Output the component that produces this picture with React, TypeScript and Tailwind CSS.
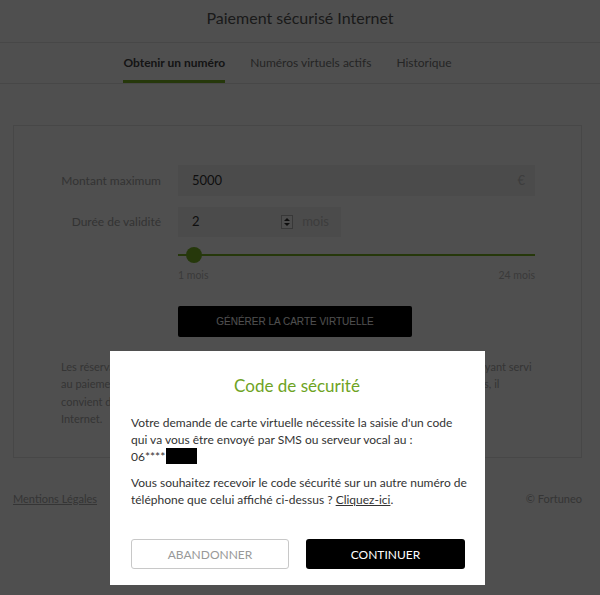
export default function App() {
  return (
    <div className="relative min-h-[595px] bg-white font-['Lato','Open_Sans',sans-serif] overflow-hidden">
      <header className="flex h-[43px] items-center justify-center border-b border-[#e6e6e6] pb-[6px] text-[16px] text-[#555]">
        Paiement sécurisé Internet
      </header>

      <nav className="flex h-[41px] justify-center gap-[25px] border-b border-[#e6e6e6] pr-[25px] text-[12px]">
        <span className="flex h-full items-center border-b-[3px] border-[#7ab526] pt-[3px] font-bold text-[#444]">
          Obtenir un numéro
        </span>
        <span className="flex h-full items-center text-[#777]">Numéros virtuels actifs</span>
        <span className="flex h-full items-center text-[#777]">Historique</span>
      </nav>

      <section className="ml-[13px] mr-[18px] mt-[41px] border border-[#e6e6e6] px-[47px] pb-[29px] pt-[39px]">
        <div className="grid grid-cols-[100px_357px] gap-x-[17px] gap-y-[11px]">
          <label className="flex items-center justify-end whitespace-nowrap text-[12px] text-[#a6a6a6]">Montant maximum</label>
          <div className="flex h-[31px] items-center justify-between bg-[#f2f2f2] pl-[14px] pr-[10px] text-[13px]">
            <span className="text-[#333]">5000</span>
            <span className="text-[#c4c4c4]">€</span>
          </div>

          <label className="flex items-center justify-end whitespace-nowrap text-[12px] text-[#a6a6a6]">Durée de validité</label>
          <div className="flex h-[30px] w-[163px] items-center bg-[#f2f2f2] pl-[14px] text-[13px]">
            <span className="flex-1 text-[#333]">2</span>
            <span className="flex h-[14px] w-[12px] flex-col items-center justify-center gap-[2px] border border-[#b5b5b5] bg-[#f7f7f7]">
              <span className="h-0 w-0 border-x-[3px] border-b-[3px] border-x-transparent border-b-[#333]" />
              <span className="h-0 w-0 border-x-[3px] border-t-[3px] border-x-transparent border-t-[#333]" />
            </span>
            <span className="ml-[9px] mr-[12px] text-[#c4c4c4]">mois</span>
          </div>

          <div />
          <div className="-mt-[1px]">
            <div className="relative flex h-[16px] items-center">
              <div className="h-[2px] w-full bg-[#7ab526]" />
              <div className="absolute left-[8px] top-0 h-[16px] w-[16px] rounded-full bg-[#7ab526]" />
            </div>
            <div className="mt-[5px] flex justify-between text-[10.5px] text-[#bbb]">
              <span>1 mois</span>
              <span>24 mois</span>
            </div>
            <button className="mt-[22px] h-[31px] w-[234px] rounded-[2px] bg-black font-['Liberation_Sans',sans-serif] text-[10px] text-white">
              GÉNÉRER LA CARTE VIRTUELLE
            </button>
          </div>
        </div>

        <p className="mt-[21px] text-[11px] leading-[17.5px] text-[#aaa]">
          Les réservations (hôtel, location de voiture...) peuvent exiger la présentation de la carte ayant servi
          <br />
          au paiement. Les cartes virtuelles n'étant pas acceptées par tous les commerçants et sites, il
          <br />
          convient de vérifier les conditions du commerçant avant de finaliser votre transaction
          <br />
          Internet.
        </p>
      </section>

      <footer className="ml-[13px] mr-[18px] mt-[33px] flex justify-between text-[11px] text-[#aaa]">
        <a className="underline">Mentions Légales</a>
        <span>© Fortuneo</span>
      </footer>

      <div className="absolute inset-0 bg-[rgba(0,0,0,0.69)]" />

      <div className="absolute left-[110px] top-[351px] h-[234px] w-[375px] bg-white pl-[21px] pr-[16px] pt-[24px] text-[12px] leading-[17px] text-[#333]">
        <h2 className="pr-[6px] text-center text-[17px] leading-[22px] text-[#6ea324]">Code de sécurité</h2>
        <p className="mt-[17px]">
          Votre demande de carte virtuelle nécessite la saisie d'un code qui va vous être envoyé par SMS ou serveur vocal au :
          <br />
          06****<span className="ml-[1px] inline-block h-[16px] w-[31px] bg-black align-[-3px]" />
        </p>
        <p className="mt-[9px]">
          Vous souhaitez recevoir le code sécurité sur un autre numéro de téléphone que celui affiché ci-dessus ?{' '}
          <a className="underline">Cliquez-ici</a>.
        </p>
        <div className="mt-[31px] flex gap-[17px]">
          <button className="h-[30px] w-[158px] rounded-[3px] border border-[#c8c8c8] text-[12px] text-[#999]">
            ABANDONNER
          </button>
          <button className="h-[30px] w-[159px] rounded-[3px] bg-black text-[12px] text-white">CONTINUER</button>
        </div>
      </div>
    </div>
  );
}
